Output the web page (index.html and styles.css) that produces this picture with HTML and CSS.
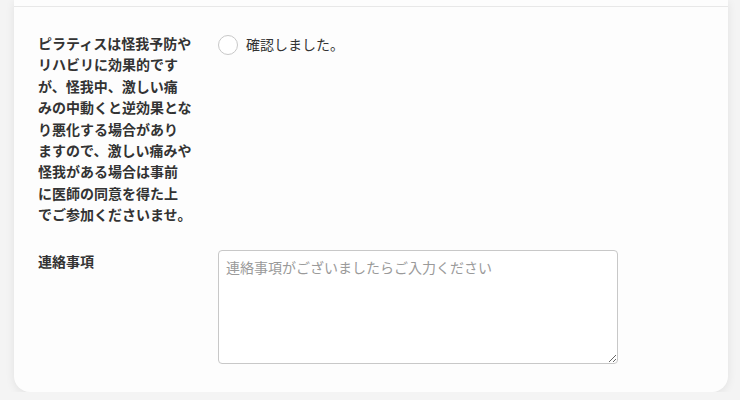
FILE: index.html
```html
<!DOCTYPE html>
<html lang="ja">
<head>
<meta charset="utf-8">
<link rel="stylesheet" href="styles.css">
</head>
<body>
<div class="card">
  <div class="card-head"></div>
  <div class="card-body">
    <div class="row">
      <div class="label">ピラティスは怪我予防や<br>リハビリに効果的です<br>が、怪我中、激しい痛<br>みの中動くと逆効果とな<br>り悪化する場合があり<br>ますので、激しい痛みや<br>怪我がある場合は事前<br>に医師の同意を得た上<br>でご参加くださいませ。</div>
      <div class="field">
        <label class="radio"><span class="circle"></span><span class="radio-text">確認しました。</span></label>
      </div>
    </div>
    <div class="row row-note">
      <div class="label">連絡事項</div>
      <div class="field">
        <textarea class="note" placeholder="連絡事項がございましたらご入力ください"></textarea>
      </div>
    </div>
  </div>
</div>
</body>
</html>
```
FILE: styles.css
```css
html, body {
  margin: 0;
  padding: 0;
  background: #f4f4f4;
  font-family: "Noto Sans CJK JP", "Noto Sans", sans-serif;
  color: #333;
}
.card {
  margin: 0 12px 0 14px;
  background: #fdfdfd;
  border-radius: 0 0 16px 16px;
  box-shadow: 0 2px 10px rgba(0, 0, 0, 0.08);
  height: 392px;
  box-sizing: border-box;
}
.card-head {
  height: 6px;
  border-bottom: 1px solid #e8e8e8;
}
.card-body {
  padding: 26px 24px 27px 24px;
  display: flex;
  flex-direction: column;
  gap: 24px;
}
.row {
  display: grid;
  grid-template-columns: 160px 1fr;
  column-gap: 20px;
}
.label {
  font-size: 14px;
  font-weight: bold;
  line-height: 21.4px;
  color: #333;
  white-space: nowrap;
}
.row-note .label {
  padding-top: 1px;
}
.radio {
  display: flex;
  align-items: center;
  gap: 8px;
  margin-top: 1px;
}
.circle {
  width: 18px;
  height: 18px;
  border: 1px solid #c8c8c8;
  border-radius: 50%;
  background: #fff;
}
.radio-text {
  font-size: 14px;
  line-height: 21px;
  color: #333;
}
.note {
  display: block;
  width: 400px;
  height: 114px;
  box-sizing: border-box;
  border: 1px solid #c8c8c8;
  border-radius: 4px;
  background: #fff;
  padding: 6px 7px;
  font-family: "Noto Sans CJK JP", "Noto Sans", sans-serif;
  font-size: 14px;
  line-height: 21px;
  color: #333;
  resize: vertical;
}
.note::placeholder {
  color: #9a9a9a;
}
```
